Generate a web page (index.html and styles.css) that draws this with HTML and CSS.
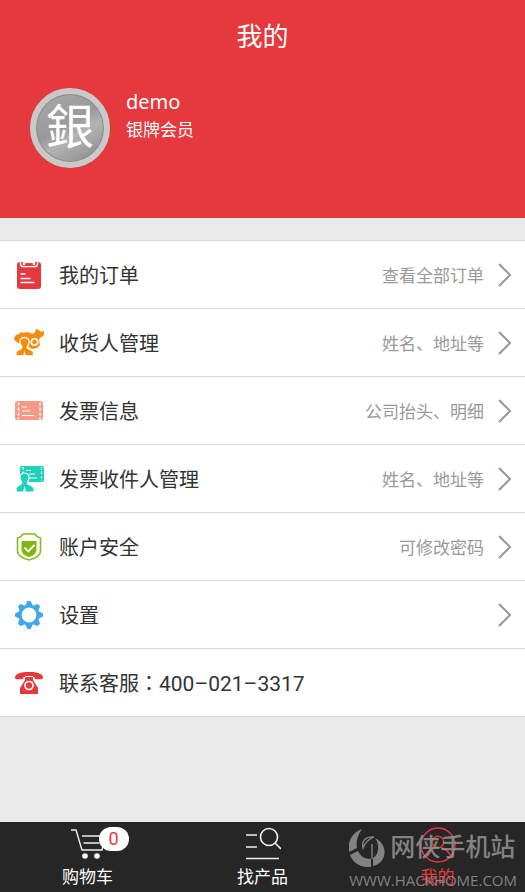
FILE: index.html
```html
<!DOCTYPE html>
<html lang="zh-CN">
<head>
  <meta charset="UTF-8">
  <meta name="viewport" content="width=device-width, initial-scale=1.0">
  <title>我的</title>
  <link rel="stylesheet" href="styles.css">
</head>
<body>
  <header class="header">
    <h1>我的</h1>
    <div class="user">
      <div class="avatar"><span>銀</span></div>
      <div>
        <div class="name">demo</div>
        <div class="level">银牌会员</div>
      </div>
    </div>
  </header>

  <main class="menu">
    <a class="row" href="#orders">
      <svg class="icon" viewBox="0 0 28 28">
        <rect x="2" y="1" width="24" height="27" rx="3" fill="#e5393d"/>
        <path d="M5.500 0v3q0 2.700 3 2.700h11q3 0 3-2.700V0" fill="none" stroke="#fff" stroke-width="1.300"/>
        <path d="M8 1.500h12" stroke="#fff" stroke-width="1.200"/>
        <circle cx="9" cy="3" r="1.300" fill="#fff"/><circle cx="19" cy="3" r="1.300" fill="#fff"/>
        <path d="M5.500 13h5M5.500 17.500h10M5.500 21.500h14" stroke="#fff" stroke-width="1.400"/>
      </svg>
      <span class="title">我的订单</span>
      <span class="note">查看全部订单</span>
      <svg class="arrow" viewBox="0 0 14 24"><path d="M1 1l11 11L1 23"/></svg>
    </a>
    <a class="row" href="#receivers">
      <svg class="icon" viewBox="0 0 28 28">
        <path d="M1 6l3-1 2-2 3 1 3-1 3 1 3 1 2-2 1-3 3 1 2 2 3-1v4l-4 3-1 2 1 5-3 3-5 1-5-3-9-3-3-2-1-3z" fill="#f88b0c"/>
        <circle cx="19.500" cy="13" r="3.200" fill="none" stroke="#fff" stroke-width="1.600"/>
        <path d="M9.500 8.500c3.500 0 5 2.500 4.500 5.500-.3 2-1.800 3-1.800 4.500 0 2 5.800 1.800 6.300 5V27H1v-3.500c.5-3.200 5.800-3 5.800-5 0-1.500-1.500-2.500-1.800-4.500-.5-3 1-5.500 4.500-5.500z" fill="#f88b0c" stroke="#fff" stroke-width="1.300"/>
        <path d="M9.500 22L8 27h3z" fill="#fff"/>
      </svg>
      <span class="title">收货人管理</span>
      <span class="note">姓名、地址等</span>
      <svg class="arrow" viewBox="0 0 14 24"><path d="M1 1l11 11L1 23"/></svg>
    </a>
    <a class="row" href="#invoice">
      <svg class="icon" viewBox="0 0 28 28">
        <rect y="4" width="28" height="19" rx="2.500" fill="#f79a85"/>
        <path d="M3.500 5.500v17M25 5.500v17" stroke="#fff" stroke-width="1.500" stroke-dasharray="3 2"/>
        <path d="M7 10h5M7 14h8M7 18.500h12" stroke="#fff" stroke-width="1.200"/>
      </svg>
      <span class="title">发票信息</span>
      <span class="note">公司抬头、明细</span>
      <svg class="arrow" viewBox="0 0 14 24"><path d="M1 1l11 11L1 23"/></svg>
    </a>
    <a class="row" href="#invoice-receivers">
      <svg class="icon" viewBox="0 0 28 28">
        <rect x="5" y="1" width="24" height="16" rx="2" fill="#1fd1bc"/>
        <path d="M8 2v14M26.500 2v14" stroke="#fff" stroke-width="1.200" stroke-dasharray="2.500 2"/>
        <path d="M11 5.500h5M14 9h6M14 13h8" stroke="#fff" stroke-width="1.200"/>
        <path d="M9.500 8c3.500 0 5 2.500 4.500 5.500-.3 2-1.800 3-1.800 4.500 0 2 6.300 2 6.800 5.500V27H1v-3.500c.5-3.500 5.800-3.500 5.800-5.500 0-1.500-1.500-2.500-1.800-4.500C4.500 10.500 6 8 9.500 8z" fill="#1fd1bc" stroke="#fff" stroke-width="1.200"/>
        <path d="M9.500 21L8 26.500h3z" fill="#fff"/>
      </svg>
      <span class="title">发票收件人管理</span>
      <span class="note">姓名、地址等</span>
      <svg class="arrow" viewBox="0 0 14 24"><path d="M1 1l11 11L1 23"/></svg>
    </a>
    <a class="row" href="#security">
      <svg class="icon" viewBox="0 0 28 28">
        <path d="M8 1h12q1.500 3 5.500 4v13q0 6-11.500 9Q2.500 24 2.500 18V5Q6.500 4 8 1z" fill="none" stroke="#86b919" stroke-width="1.600"/>
        <path d="M6.500 8h15v9q0 4.500-7.500 7-7.500-2.500-7.500-7z" fill="#7fb80e"/>
        <path d="M9.500 14.500l3.700 4 6.300-6.500" fill="none" stroke="#fff" stroke-width="1.800"/>
      </svg>
      <span class="title">账户安全</span>
      <span class="note">可修改密码</span>
      <svg class="arrow" viewBox="0 0 14 24"><path d="M1 1l11 11L1 23"/></svg>
    </a>
    <a class="row" href="#settings">
      <svg class="icon" viewBox="0 0 28 28" fill="#3fa9e8">
        <circle cx="14" cy="14" r="8.700" fill="none" stroke="#3fa9e8" stroke-width="2.600"/>
        <g id="teeth">
          <path id="tooth" d="M10 5l2.400-5h3.200L18 5z"/>
          <path d="M10 5l2.400-5h3.200L18 5z" transform="rotate(45 14 14)"/>
          <path d="M10 5l2.400-5h3.200L18 5z" transform="rotate(90 14 14)"/>
          <path d="M10 5l2.400-5h3.200L18 5z" transform="rotate(135 14 14)"/>
          <path d="M10 5l2.400-5h3.200L18 5z" transform="rotate(180 14 14)"/>
          <path d="M10 5l2.400-5h3.200L18 5z" transform="rotate(225 14 14)"/>
          <path d="M10 5l2.400-5h3.200L18 5z" transform="rotate(270 14 14)"/>
          <path d="M10 5l2.400-5h3.200L18 5z" transform="rotate(315 14 14)"/>
        </g>
      </svg>
      <span class="title">设置</span>
      <svg class="arrow" viewBox="0 0 14 24"><path d="M1 1l11 11L1 23"/></svg>
    </a>
    <a class="row" href="tel:4000213317">
      <svg class="icon" viewBox="0 0 28 28">
        <path d="M0 8.500C0 5 5 3 14 3s14 2 14 5.500q0 1.800-1.500 1.800H21q-1.500 0-1.500-2.300h-11Q8.500 10.300 7 10.300H1.500Q0 10.300 0 8.500z" fill="#e5393d"/>
        <path d="M10 8h8v3l5 8v6H5v-6l5-8z" fill="#e5393d"/>
        <path d="M10 7.500h8" stroke="#fff" stroke-width="1"/>
        <circle cx="14" cy="16.500" r="4" fill="none" stroke="#fff" stroke-width="1.700"/>
      </svg>
      <span class="title">联系客服<span class="colon" lang="zh-TW">：</span><span class="tel">400–021–3317</span></span>
    </a>
  </main>

  <nav class="tabs">
    <a href="#cart">
      <span class="tab-icon">
        <svg width="34" height="34" viewBox="0 0 34 34" fill="none" stroke="#eee" stroke-width="1.400">
          <path d="M0 3h5l6 20h20l3-14H11M12.500 16h16"/>
          <circle cx="14" cy="29" r="2.800" fill="#fff" stroke="none"/>
          <circle cx="26" cy="29" r="2.800" fill="#fff" stroke="none"/>
        </svg>
        <span class="badge">0</span>
      </span>
      购物车
    </a>
    <a href="#products">
      <span class="tab-icon">
        <svg width="36" height="34" viewBox="0 0 36 34" fill="none" stroke="#eee" stroke-width="1.600">
          <circle cx="24" cy="10" r="8.500"/>
          <path d="M30 16l6 6M1 8h11M1 20h11M1 31.500h33"/>
        </svg>
      </span>
      找产品
    </a>
    <a class="active" href="#mine">
      <span class="tab-icon">
        <svg width="36" height="36" viewBox="0 0 36 36" fill="none" stroke="#e5393d" stroke-width="1.500">
          <circle cx="18" cy="18" r="17"/>
          <circle cx="18" cy="15" r="5.700"/>
          <path d="M5 29q4-7 10-8.500M31 29q-4-7-10-8.500"/>
        </svg>
      </span>
      我的
    </a>
    <div class="watermark">
      <div class="brand">
        <svg width="36" height="38" viewBox="0 0 36 38" fill="#999">
          <path d="M13 0C8 7 7 14 8 19L0 23C-2 12 4 3 13 0z"/>
          <path d="M1 26l8-4c3 6 7 8 13 8v8C12 39 4 34 1 26z"/>
          <path d="M24 37v-8c6-4 7-13 2-20 13 6 13 24-2 28z"/>
          <path d="M14 19c-2-7 3-12 11-11-6 2-9 6-11 11zM23 15v15" fill="none" stroke="#999" stroke-width="1.400"/>
        </svg>
        <span>网侠手机站</span>
      </div>
      <div class="site">WWW.HACKHOME.COM</div>
    </div>
  </nav>
</body>
</html>
```

FILE: styles.css
```css
* { box-sizing: border-box; }
body {
  margin: 0;
  min-height: 100vh;
  display: flex;
  flex-direction: column;
  background: #eaeaea;
  color: #333;
  font-family: Roboto, "Noto Sans CJK SC", sans-serif;
}
a { color: inherit; text-decoration: none; }

.header {
  background: #e5393d;
  color: #fff;
  padding: 17px 30px 50px;
}
h1 {
  margin: 0;
  font-size: 26px;
  line-height: 40px;
  font-weight: 400;
  text-align: center;
}
.user {
  display: flex;
  gap: 16px;
  margin-top: 31px;
}
.avatar {
  width: 80px;
  height: 80px;
  border-radius: 50%;
  border: 6px solid #c9c9c9;
  background: linear-gradient(150deg, #aaa, #999 45%, #b4b4b4 60%, #858585);
  box-shadow: inset 0 0 0 1px #8a8a8a;
  display: flex;
  align-items: center;
  justify-content: center;
  font-size: 48px;
  line-height: 68px;
}
.name {
  font-family: "Noto Sans", sans-serif;
  font-size: 20px;
  line-height: 28px;
}
.level { font-size: 17px; line-height: 28px; }

.menu {
  margin-top: 22px;
  border-top: 1px solid #d9d9d9;
}
.row {
  display: flex;
  align-items: center;
  height: 68px;
  padding: 0 13px 0 15px;
  background: #fff;
  border-bottom: 1px solid #d9d9d9;
}
.icon { width: 28px; height: 28px; margin-right: 16px; overflow: visible; }
.title { flex: 1; font-size: 20px; }
.colon { font-family: "Noto Sans CJK TC", sans-serif; }
.tel { font-size: 21px; }
.note { font-size: 17px; color: #999; }
.arrow {
  width: 14px;
  height: 24px;
  margin-left: 14px;
  fill: none;
  stroke: #999;
  stroke-width: 2;
}

.tabs {
  position: relative;
  display: flex;
  margin-top: auto;
  height: 70px;
  background: #262626;
  color: #fff;
}
.tabs a {
  flex: 1;
  display: flex;
  flex-direction: column;
  align-items: center;
  padding-top: 5px;
  font-size: 17px;
  line-height: 26px;
}
.tabs .active { color: #e5393d; }
.tab-icon { position: relative; height: 37px; }
.tab-icon svg { display: block; }
.badge {
  position: absolute;
  left: 28px;
  top: 0;
  width: 30px;
  border-radius: 12px;
  background: #fff;
  color: #e5393d;
  font-size: 18px;
  line-height: 24px;
  text-align: center;
}

/* overlay in the corner of the tab bar */
.watermark {
  position: absolute;
  right: 8px;
  bottom: 0;
  color: #999;
  opacity: 0.8;
  pointer-events: none;
}
.brand {
  display: flex;
  align-items: center;
  gap: 5px;
  font-size: 25px;
  line-height: 40px;
  font-weight: 500;
}
.site {
  font-family: "Open Sans", sans-serif;
  font-size: 15px;
  line-height: 24px;
}
```
